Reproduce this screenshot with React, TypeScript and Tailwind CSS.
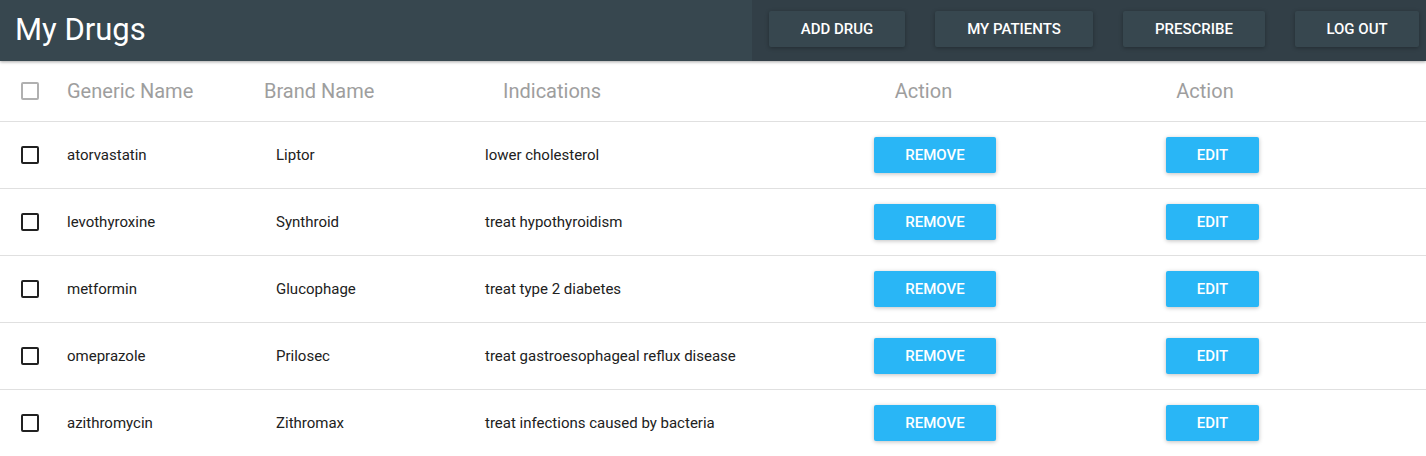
import { useState } from "react"

type Drug = {
  generic: string
  brand: string
  indication: string
}

const drugs: Drug[] = [
  { generic: "atorvastatin", brand: "Liptor", indication: "lower cholesterol" },
  { generic: "levothyroxine", brand: "Synthroid", indication: "treat hypothyroidism" },
  { generic: "metformin", brand: "Glucophage", indication: "treat type 2 diabetes" },
  { generic: "omeprazole", brand: "Prilosec", indication: "treat gastroesophageal reflux disease" },
  { generic: "azithromycin", brand: "Zithromax", indication: "treat infections caused by bacteria" },
]

const navButtons = [
  { label: "ADD DRUG", w: "w-[136px]" },
  { label: "MY PATIENTS", w: "w-[158px]" },
  { label: "PRESCRIBE", w: "w-[142px]" },
  { label: "LOG OUT", w: "w-[124px]" },
]

function Checkbox({ checked, muted, onClick }: { checked: boolean; muted?: boolean; onClick: () => void }) {
  return (
    <button
      onClick={onClick}
      className={`w-[18px] h-[18px] rounded-[2px] border-2 flex items-center justify-center ${
        muted ? "border-[#b0b0b0]" : "border-[#212121]"
      } ${checked ? "bg-[#212121]" : "bg-white"}`}
    >
      {checked && (
        <svg viewBox="0 0 24 24" className="w-[14px] h-[14px] text-white" fill="none" stroke="currentColor" strokeWidth={3}>
          <path d="M5 12l5 5L20 7" />
        </svg>
      )}
    </button>
  )
}

export default function App() {

  const [selected, setSelected] = useState<boolean[]>(drugs.map(() => false))
  const allChecked = selected.every(Boolean)

  return (
    <div className="w-[1426px] h-[456px] bg-white overflow-hidden font-['Roboto',sans-serif]">

      {/* APP BAR */}

      <header className="relative z-10 h-[61px] flex shadow-[0_1px_3px_rgba(0,0,0,0.35)]">
        <div className="w-[752px] bg-[#37474f] flex items-center pl-[15px] pb-[2px]">
          <h1 className="text-[31px] text-white leading-none">My Drugs</h1>
        </div>
        <nav className="flex-1 bg-[#323f47] flex items-start pt-[11px] pl-[17px] gap-[30px]">
          {navButtons.map((b) => (
            <button
              key={b.label}
              className={`${b.w} h-[36px] bg-[#37474f] rounded-[2px] text-white text-[15px] font-medium shadow-[0_1px_4px_rgba(0,0,0,0.3)]`}
            >
              {b.label}
            </button>
          ))}
        </nav>
      </header>

      {/* TABLE HEAD */}

      <div className="h-[61px] flex items-center border-b border-[#e0e0e0] text-[20px] text-[#9e9e9e]">
        <div className="w-[67px] pl-[21px] flex items-center">
          <Checkbox
            checked={allChecked}
            muted
            onClick={() => setSelected(drugs.map(() => !allChecked))}
          />
        </div>
        <div className="w-[197px]">Generic Name</div>
        <div className="w-[239px]">Brand Name</div>
        <div className="w-[280px]">Indications</div>
        <div className="w-[281px] text-center">Action</div>
        <div className="w-[282px] text-center">Action</div>
      </div>

      {/* ROWS */}

      {drugs.map((d, i) => (
        <div key={d.generic} className="h-[67px] flex items-center border-b border-[#e0e0e0] text-[15px] text-[#212121]">
          <div className="w-[67px] pl-[21px] flex items-center">
            <Checkbox
              checked={selected[i]}
              onClick={() => setSelected(selected.map((s, j) => (j === i ? !s : s)))}
            />
          </div>
          <div className="w-[209px]">{d.generic}</div>
          <div className="w-[209px]">{d.brand}</div>
          <div className="w-[315px]">{d.indication}</div>
          <div className="w-[270px] flex justify-center">
            <button className="w-[122px] h-[36px] bg-[#29b6f6] rounded-[2px] text-white text-[15px] font-medium shadow-[0_1px_4px_rgba(0,0,0,0.25)]">
              REMOVE
            </button>
          </div>
          <div className="w-[285px] flex justify-center">
            <button className="w-[93px] h-[36px] bg-[#29b6f6] rounded-[2px] text-white text-[15px] font-medium shadow-[0_1px_4px_rgba(0,0,0,0.25)]">
              EDIT
            </button>
          </div>
        </div>
      ))}

    </div>
  )
}
